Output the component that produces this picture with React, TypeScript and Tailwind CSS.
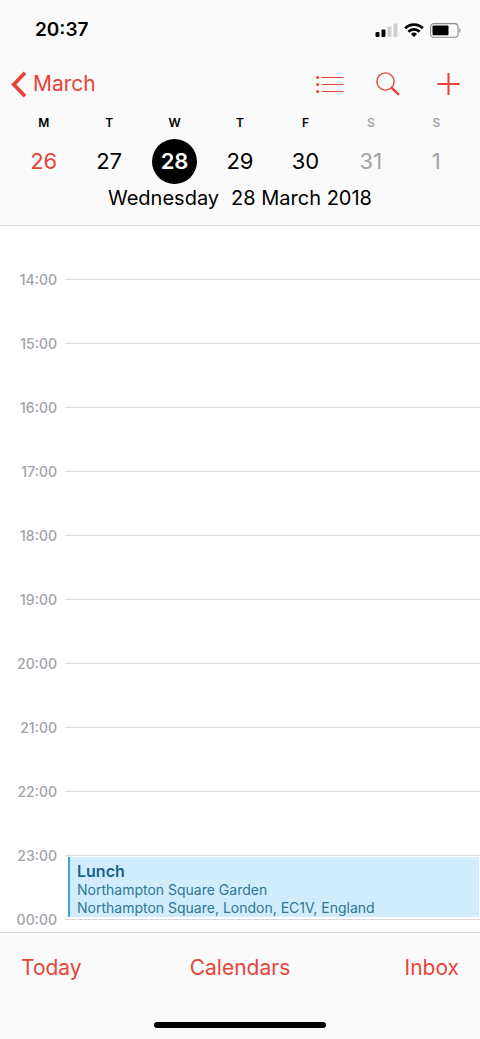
import { useState } from "react";

type Day = { letter: string; date: number; tone?: "today" | "weekend" };

const week: Day[] = [
  { letter: "M", date: 26, tone: "today" },
  { letter: "T", date: 27 },
  { letter: "W", date: 28 },
  { letter: "T", date: 29 },
  { letter: "F", date: 30 },
  { letter: "S", date: 31, tone: "weekend" },
  { letter: "S", date: 1, tone: "weekend" },
];

const hours = [
  "14:00",
  "15:00",
  "16:00",
  "17:00",
  "18:00",
  "19:00",
  "20:00",
  "21:00",
  "22:00",
  "23:00",
  "00:00",
];

const events = [
  {
    start: "23:00",
    title: "Lunch",
    lines: [
      "Northampton Square Garden",
      "Northampton Square, London, EC1V, England",
    ],
  },
];

function StatusBar() {
  return (
    <div className="flex h-[60px] items-center justify-between pr-[18px] pl-[35px]">
      <time className="text-[19px] font-semibold text-black">20:37</time>
      <div className="flex items-center gap-[6px]">
        <svg width="23" height="14" viewBox="0 0 23 14" aria-hidden="true">
          <rect x="0.5" y="9" width="4" height="5" rx="1" />
          <rect x="6.5" y="6.5" width="4" height="7.5" rx="1" />
          <rect x="12.5" y="3.5" width="4" height="10.5" rx="1" fill="#cfcfcf" />
          <rect x="18.5" y="0.5" width="4" height="13.5" rx="1" fill="#cfcfcf" />
        </svg>
        <svg width="20" height="14" viewBox="0 0 20 14" aria-hidden="true">
          <g fill="none" stroke="#000" strokeWidth="2.8">
            <path d="M1.2 5.3a12.6 12.6 0 0 1 17.6 0" />
            <path d="M4.4 8.7a8 8 0 0 1 11.2 0" />
          </g>
          <path d="M10 14l-3-3a4.3 4.3 0 0 1 6 0z" />
        </svg>
        <svg width="32" height="15" viewBox="0 0 32 15" aria-hidden="true">
          <rect
            x="0.6"
            y="0.6"
            width="27.4"
            height="13.6"
            rx="3.2"
            fill="none"
            stroke="#8c8c8c"
            strokeWidth="1.1"
          />
          <rect x="2.5" y="2.5" width="16" height="9.8" rx="1" />
          <path d="M29.3 5v5c1.6-.8 1.6-4.2 0-5z" fill="#8c8c8c" />
        </svg>
      </div>
    </div>
  );
}

function NavBar() {
  return (
    <nav className="flex h-12 items-center justify-between pr-5 pl-[11px] text-[#e8433a]">
      <a href="#march" className="flex items-center gap-[6px] text-[21px]">
        <svg width="16" height="28" viewBox="0 0 16 28" aria-hidden="true">
          <path
            d="M14 2.8L2.8 14.5 14 26.2"
            fill="none"
            stroke="currentColor"
            strokeWidth="3.8"
            strokeLinecap="butt"
            strokeLinejoin="miter"
          />
        </svg>
        March
      </a>
      <div className="flex items-center">
        <button type="button" aria-label="List" className="mr-8">
          <svg width="28" height="18" viewBox="0 0 28 18" className="block">
            <g fill="currentColor">
              <circle cx="1.6" cy="2.5" r="1.5" />
              <circle cx="1.6" cy="9.5" r="1.5" />
              <circle cx="1.6" cy="16.4" r="1.5" />
            </g>
            <path
              d="M5.5 2.5h22M5.5 9.5h22M5.5 16.5h22"
              fill="none"
              stroke="currentColor"
              strokeWidth="1.1"
            />
          </svg>
        </button>
        <button type="button" aria-label="Search" className="mr-9">
          <svg width="24" height="24" viewBox="0 0 24 24" className="block">
            <circle
              cx="9.5"
              cy="9.5"
              r="8.6"
              fill="none"
              stroke="currentColor"
              strokeWidth="1.4"
            />
            <path
              d="M15.8 15.8L22.2 22.2"
              stroke="currentColor"
              strokeWidth="2.5"
              strokeLinecap="round"
            />
          </svg>
        </button>
        <button type="button" aria-label="Add event">
          <svg width="24" height="24" viewBox="0 0 24 24" className="block">
            <path
              d="M12.5 1v22M1.5 12h22"
              stroke="currentColor"
              strokeWidth="2"
              fill="none"
            />
          </svg>
        </button>
      </div>
    </nav>
  );
}

function WeekStrip({
  selected,
  onSelect,
}: {
  selected: number;
  onSelect: (date: number) => void;
}) {
  const color = (day: Day) => {
    if (day.date === selected) return "bg-black font-semibold text-white";
    if (day.tone === "today") return "text-[#e8433a]";
    if (day.tone === "weekend") return "text-[#a3a3a3]";
    return "text-black";
  };

  return (
    <div className="grid grid-cols-7 px-[11px] pt-[7px]">
      {week.map((day) => (
        <div key={day.date} className="flex flex-col items-center gap-2">
          <span
            className={
              "text-xs font-semibold " +
              (day.tone === "weekend" ? "text-[#a3a3a3]" : "text-black")
            }
          >
            {day.letter}
          </span>
          <button
            type="button"
            onClick={() => onSelect(day.date)}
            className={
              "flex size-[45px] items-center justify-center rounded-full text-[22px] " +
              color(day)
            }
          >
            {day.date}
          </button>
        </div>
      ))}
    </div>
  );
}

function Timeline() {
  return (
    <ol className="flex flex-1 flex-col gap-12 bg-white pt-[45px] pb-[5px]">
      {hours.map((hour) => (
        <li key={hour} className="relative flex h-4 items-center gap-2">
          <span className="w-[57px] pt-px text-right text-sm font-medium text-[#a2a2a7]">
            {hour}
          </span>
          <div className="h-px flex-1 bg-[#dadadc]" />
          {events
            .filter((event) => event.start === hour)
            .map((event) => (
              <a
                key={event.title}
                href="#event"
                className="absolute top-[10px] right-px left-[68px] z-10 h-[60px] border-l-2 border-[#35a7d0] bg-[#d1edfd] pt-1 pl-[7px] text-sm leading-[18px] text-[#2b7896]"
              >
                <p className="text-base leading-5 font-semibold text-[#17648a]">
                  {event.title}
                </p>
                {event.lines.map((line) => (
                  <p key={line}>{line}</p>
                ))}
              </a>
            ))}
        </li>
      ))}
    </ol>
  );
}

export default function App() {
  const [selected, setSelected] = useState(28);

  return (
    <div className="flex min-h-screen flex-col bg-[#fafafa] font-['Inter',sans-serif]">
      <header className="border-b border-[#d6d6d6] pb-[13px]">
        <StatusBar />
        <NavBar />
        <WeekStrip selected={selected} onSelect={setSelected} />
        <h1 className="flex justify-center gap-3 text-xl">
          <span>Wednesday</span>
          <span>28 March 2018</span>
        </h1>
      </header>

      <Timeline />

      <footer className="border-t border-[#d6d6d6] text-[21px] text-[#e8433a]">
        <div className="grid h-[70px] grid-cols-3 items-center px-[21px]">
          <button type="button" className="justify-self-start">
            Today
          </button>
          <button type="button" className="justify-self-center">
            Calendars
          </button>
          <button type="button" className="justify-self-end">
            Inbox
          </button>
        </div>
        <div className="flex justify-center pt-[19px] pb-[11px]">
          <div className="h-[6px] w-[172px] rounded-full bg-black" />
        </div>
      </footer>
    </div>
  );
}
